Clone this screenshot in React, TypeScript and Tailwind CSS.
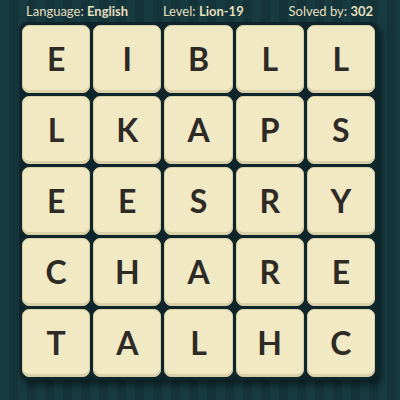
const rows = [
  ["E", "I", "B", "L", "L"],
  ["L", "K", "A", "P", "S"],
  ["E", "E", "S", "R", "Y"],
  ["C", "H", "A", "R", "E"],
  ["T", "A", "L", "H", "C"],
]

export default function App() {
  return (
    <div className="w-[400px] h-[400px] overflow-hidden bg-[repeating-linear-gradient(90deg,#173b41_0px,#173b41_9px,#14343a_9px,#14343a_18px)] font-['Lato','Noto_Sans',sans-serif]">
      {/* Header */}
      <div className="h-[22px] flex items-center justify-between pl-[26px] pr-[27px] text-[13px] leading-none text-[#e6dfbf]">
        <span>
          Language: <b className="font-bold">English</b>
        </span>
        <span className="-ml-[10px]">
          Level: <b className="font-bold">Lion-19</b>
        </span>
        <span>
          Solved by: <b className="font-bold">302</b>
        </span>
      </div>

      {/* Board */}
      <div className="ml-[19px] w-[359px] p-[3px] rounded-[8px] bg-[#0e262b] shadow-[4px_5px_6px_rgba(0,0,0,0.45)]">
        <div className="grid grid-cols-5 gap-[3px]">
          {rows.flat().map((ch, i) => (
            <div
              key={i}
              className="h-[68px] rounded-[7px] bg-[#f1e9c4] border border-[#d9cfa6] shadow-[inset_0_-2px_0_rgba(150,135,90,0.25)] flex items-center justify-center text-[32px] font-bold text-[#2e2a25]"
            >
              {ch}
            </div>
          ))}
        </div>
      </div>
    </div>
  )
}
